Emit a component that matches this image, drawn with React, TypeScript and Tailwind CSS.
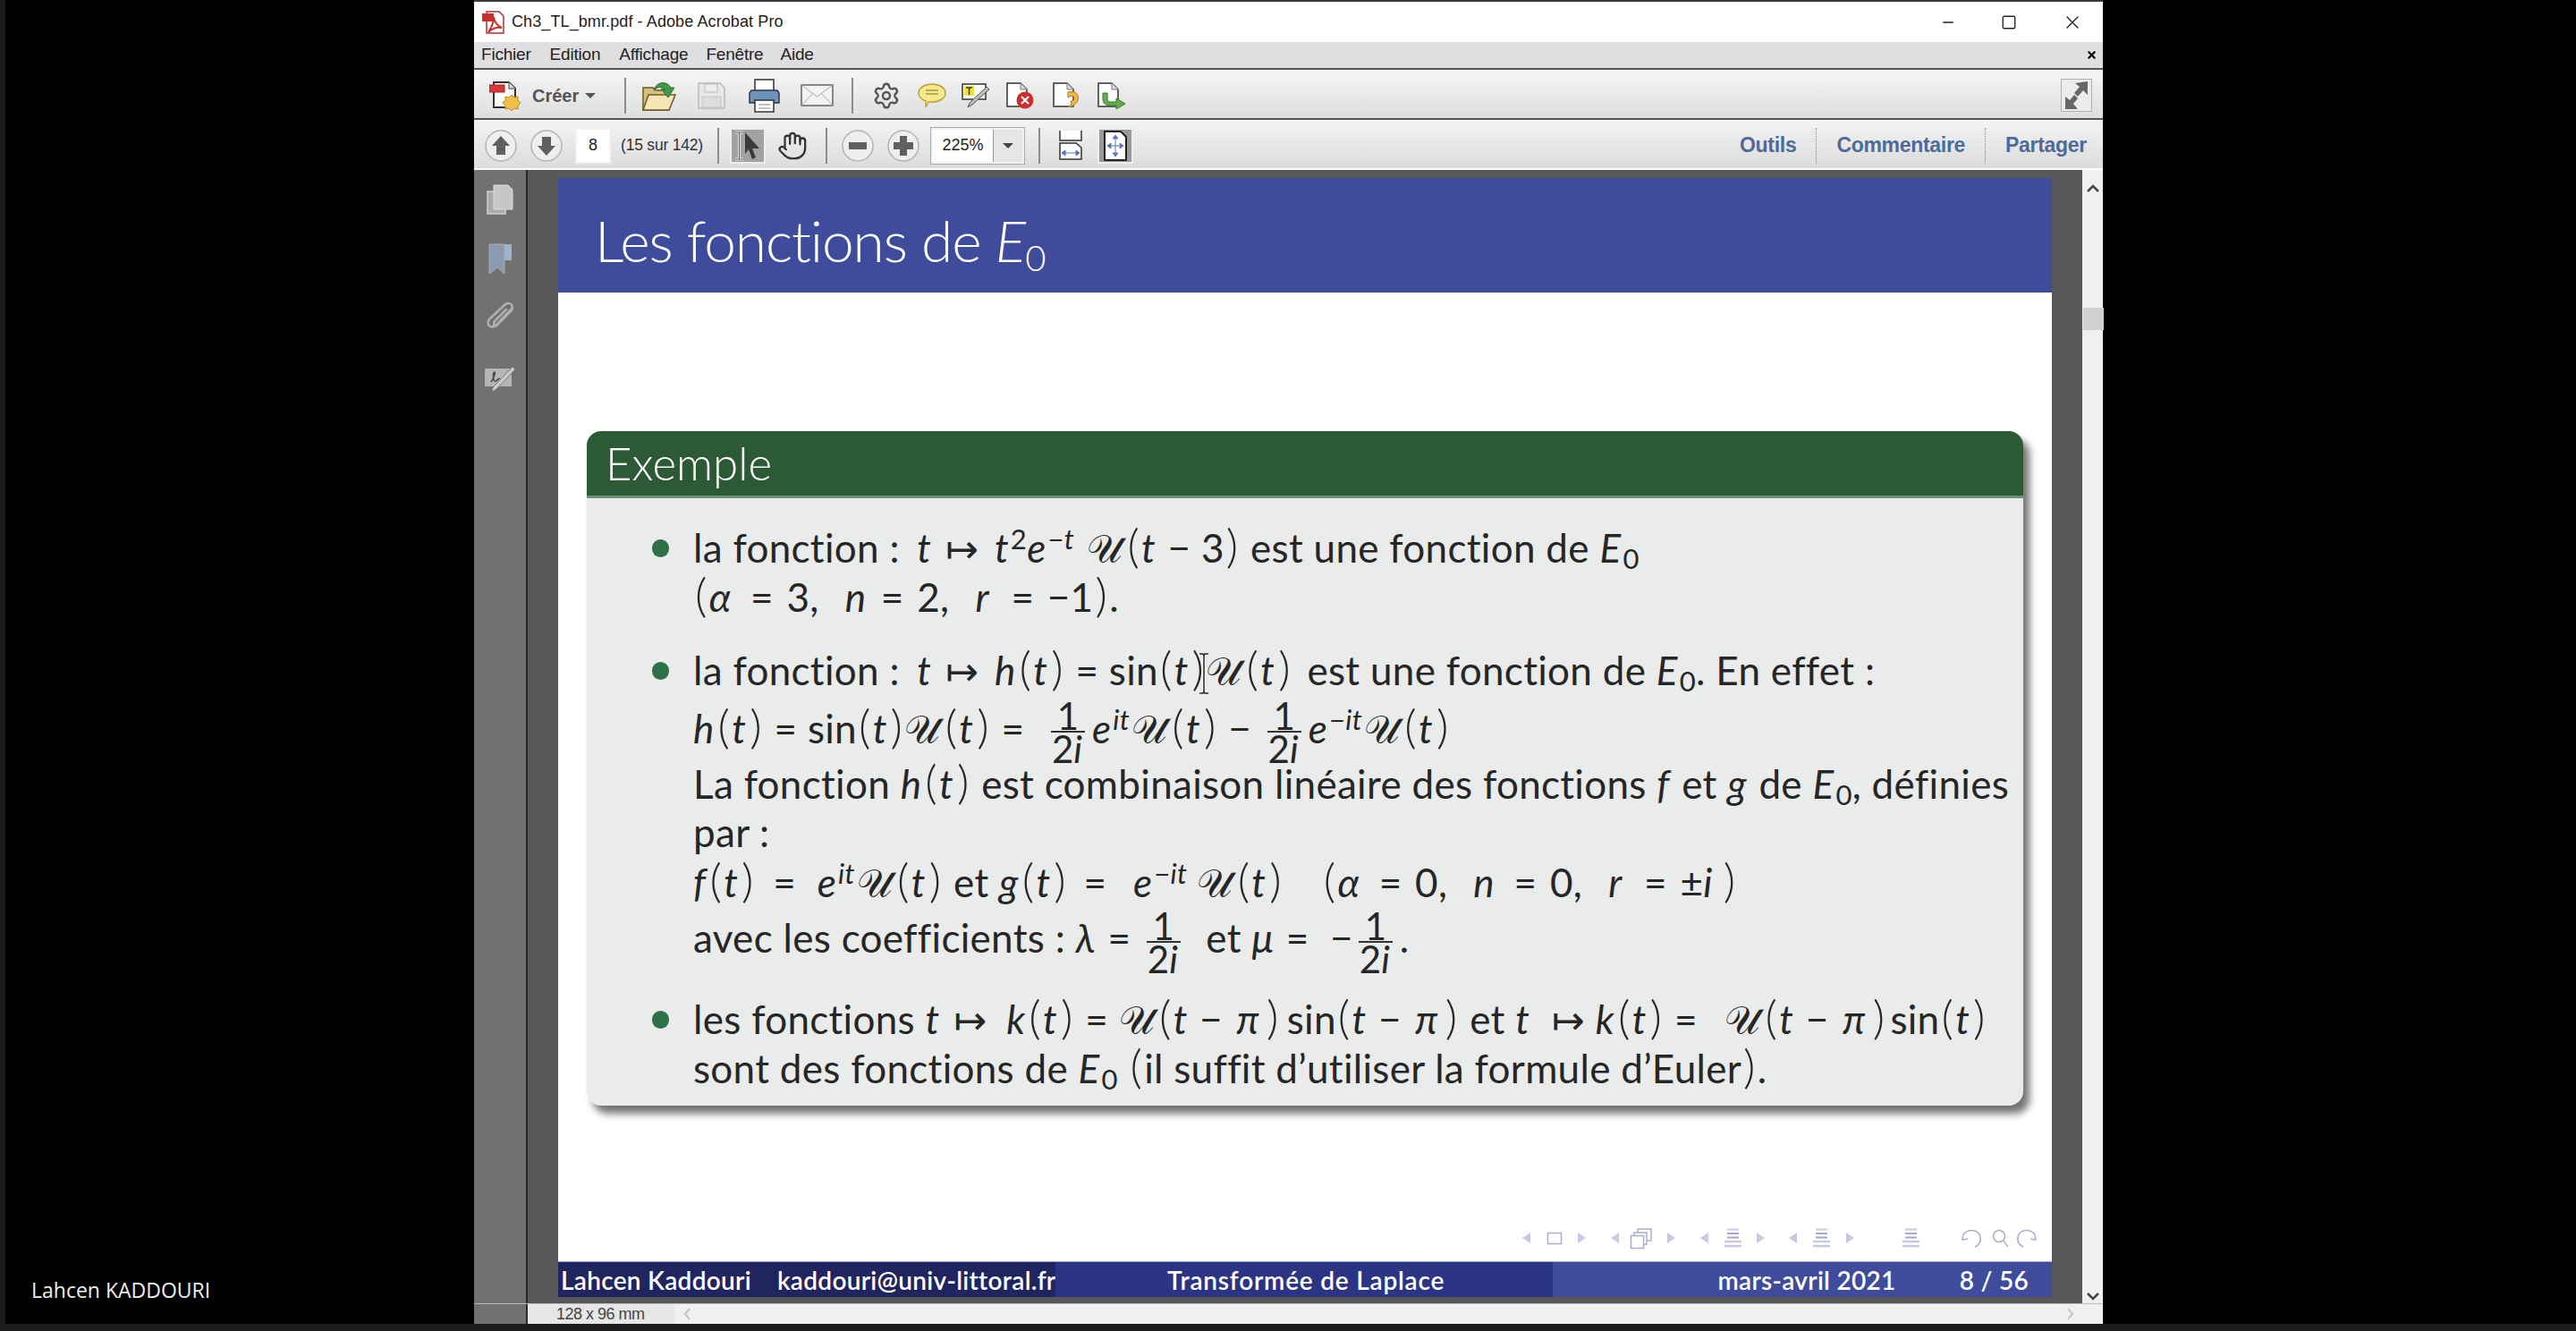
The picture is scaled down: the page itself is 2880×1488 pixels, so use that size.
import React from 'react';
import { Settings, Hand, X, Minus, Square } from 'lucide-react';

// -- Small math helpers for the slide --
const I = ({ children }: { children: React.ReactNode }) => <span className="italic pr-[2px]">{children}</span>;
const Up = ({ children }: { children: React.ReactNode }) => (
  <sup className="text-[31px] top-[-15px] leading-none">{children}</sup>
);
const Sub0 = () => <sub className="text-[31px] top-[7px] bottom-auto leading-none">0</sub>;
const U = () => <span className="font-['DejaVu_Sans',serif] text-[44px] font-light pr-[3px]">𝒰</span>;
const P = ({ children }: { children: React.ReactNode }) => (
  <span className="font-light text-[52px] leading-none px-[2px]">{children}</span>
);
const Tt = () => (
  <>
    <P>(</P>
    <I>t</I>
    <P>)</P>
  </>
);
const Pi = () => <span className="italic pl-[4px] pr-[6px]">π</span>;
const Eq = () => <span className="px-[3px]"> = </span>;
const Mp = () => <span className="pl-[14px]">↦ </span>;
// fixed width gap between math atoms
const Sp = ({ c }: { c: string }) => <span className={`inline-block ${c}`} />;
const Frac = () => (
  <span className="inline-flex flex-col justify-center items-center align-middle h-[40px] ml-[6px] mr-[8px] tracking-normal">
    <span className="text-[42px] leading-[34px]">1</span>
    <span className="w-[38px] h-[2px] bg-[#333] shrink-0" />
    <span className="text-[42px] leading-[36px]">
      2<I>i</I>
    </span>
  </span>
);
const Bullet = () => <span className="w-[19px] h-[20px] rounded-full bg-[#2e7148] shrink-0 mt-[3px] mr-[27px] ml-[-46px]" />;

const Line = ({ className = '', bullet, children }: { className?: string; bullet?: boolean; children: React.ReactNode }) => (
  <div className={`h-[55px] flex items-center ${className}`}>
    {bullet && <Bullet />}
    <div className="whitespace-pre leading-[55px]">{children}</div>
  </div>
);

// -- Toolbar icons, drawn by hand --
const PdfIcon = () => (
  <svg width="27" height="26" viewBox="0 0 27 26" className="shrink-0">
    <path d="M5 1h14l5 5v19H5z" fill="#fff" stroke="#a33" strokeWidth="1.5" />
    <path d="M0 3h13v9H0z" fill="#c9302c" />
    <path d="M7 24c4-6 6-11 6-17 1 6 4 10 9 12-6-1-11 1-15 5z" fill="none" stroke="#c9302c" strokeWidth="2" />
  </svg>
);
const CreateIcon = () => (
  <svg width="36" height="36" viewBox="0 0 36 36" className="shrink-0">
    <path d="M5 3h17l7 7v21H5z" fill="#fdfdfd" stroke="#333" strokeWidth="2" />
    <path d="M22 3v7h7" fill="#ddd" stroke="#777" strokeWidth="1.5" />
    <rect x="0" y="6" width="17" height="8" fill="#d8383a" stroke="#a22" />
    <path d="M25 17l3 3 4-1 0 4 3 3-3 3 0 4-4-1-3 3-3-3-4 1 0-4-3-3 3-3 0-4 4 1z" fill="#f2c04a" stroke="#b98a20" />
  </svg>
);
const FolderIcon = () => (
  <svg width="38" height="36" viewBox="0 0 38 36" className="shrink-0">
    <path d="M1 9h11l3 3h15v22H1z" fill="#d9bf7c" stroke="#6b5a2a" strokeWidth="1.5" />
    <path d="M1 34l6-17h30l-7 17z" fill="#f6e6b4" stroke="#6b5a2a" strokeWidth="1.5" />
    <path d="M13 12c2-9 14-12 19-3l4 0-7 11-8-10 5 1c-4-4-9-3-13 1z" fill="#3f9a45" stroke="#2c6e30" />
  </svg>
);
const SaveIcon = () => (
  <svg width="31" height="30" viewBox="0 0 31 30" className="shrink-0">
    <path d="M1 1h24l5 5v23H1z" fill="#e8e8e8" stroke="#bbb" strokeWidth="1.5" />
    <rect x="8" y="2" width="14" height="9" fill="#eee" stroke="#bbb" />
    <rect x="5" y="16" width="21" height="12" fill="#ddd" stroke="#c4c4c4" />
  </svg>
);
const PrintIcon = () => (
  <svg width="35" height="38" viewBox="0 0 35 38" className="shrink-0">
    <rect x="7" y="1" width="21" height="14" fill="#fff" stroke="#333" strokeWidth="1.5" />
    <path d="M3 13h29l2 3v11H1V16z" fill="#6e93b8" stroke="#335" strokeWidth="1.5" />
    <rect x="7" y="24" width="21" height="13" fill="#fff" stroke="#333" strokeWidth="1.5" />
    <path d="M11 29h13M11 33h13" stroke="#888" />
  </svg>
);
const MailIcon = () => (
  <svg width="37" height="25" viewBox="0 0 37 25" className="shrink-0">
    <rect x="1" y="1" width="35" height="23" fill="#f3f3f3" stroke="#666" strokeWidth="1.5" />
    <path d="M1 1l17.5 13L36 1M1 24l12-13M36 24L24 11" fill="none" stroke="#aaa" />
  </svg>
);
const CommentIcon = () => (
  <svg width="32" height="28" viewBox="0 0 32 28" className="shrink-0">
    <path d="M16 1c8 0 15 4 15 10s-7 10-15 10c-1 0-3 0-4 0l-3 6 0-7C4 18 1 15 1 11 1 5 8 1 16 1z" fill="#f6e88e" stroke="#b9a53a" strokeWidth="1.5" />
    <path d="M9 8h14M9 12h14" stroke="#a8973a" strokeWidth="1.5" />
  </svg>
);
const SignIcon = () => (
  <svg width="32" height="28" viewBox="0 0 32 28" className="shrink-0">
    <path d="M1 1h26v17H1z" fill="#fff" stroke="#333" strokeWidth="1.5" />
    <rect x="3" y="3" width="11" height="11" fill="#f4e23c" />
    <path d="M5 5h7M8.500 5v8" stroke="#333" strokeWidth="1.5" />
    <path d="M28 4l3 3-19 17-5 3 2-5z" fill="#bbb" stroke="#555" />
  </svg>
);
const DocShape = () => (
  <>
    <path d="M1 1h15l7 7v19H1z" fill="#fff" stroke="#333" strokeWidth="1.5" />
    <path d="M16 1v7h7" fill="#ddd" stroke="#777" />
  </>
);
const DocX = () => (
  <svg width="31" height="30" viewBox="0 0 31 30" className="shrink-0">
    <DocShape />
    <circle cx="21" cy="20" r="9.500" fill="#c9302c" />
    <path d="M17 16l8 8M25 16l-8 8" stroke="#fff" strokeWidth="2" />
  </svg>
);
const DocBack = () => (
  <svg width="31" height="30" viewBox="0 0 31 30" className="shrink-0">
    <DocShape />
    <path d="M17 11c8-2 13 2 11 9-1 4-6 7-11 8l4-4-1-3c4 0 5-3 3-5-1-1-3-1-6 1z" fill="#efb648" stroke="#a87c1c" />
  </svg>
);
const DocGreen = () => (
  <svg width="32" height="30" viewBox="0 0 32 30" className="shrink-0">
    <DocShape />
    <path d="M11 12v7c0 2 2 3 4 3h6v-4l10 6-10 6v-4h-7c-5 0-8-3-8-7v-7z" fill="#62ad4e" stroke="#38752a" />
  </svg>
);
const RoundBtn = ({ d }: { d: string }) => (
  <svg width="36" height="36" viewBox="0 0 36 36" className="shrink-0">
    <circle cx="18" cy="18" r="17" fill="#eeeeee" stroke="#b5b5b5" strokeWidth="1.5" />
    <path d={d} fill="#606060" />
  </svg>
);
const SelectIcon = () => (
  <svg width="32" height="34" viewBox="0 0 32 34" className="shrink-0">
    <path d="M2 2h9M2 32h9M6.500 2v30" stroke="#e4e4e4" strokeWidth="3" fill="none" />
    <path d="M2 2h9M2 32h9M6.500 2v30" stroke="#666" strokeWidth="1" fill="none" />
    <path d="M13 2l16 18-8 0 4 10-4 2-4-11-4 5z" fill="#3a3a3a" />
  </svg>
);
const FitWidth = () => (
  <svg width="26" height="33" viewBox="0 0 26 33" className="shrink-0">
    <path d="M1 0v11h24V0" fill="#fff" stroke="#333" strokeWidth="1.5" />
    <path d="M1 14h18l6 5v13H1z" fill="#fff" stroke="#333" strokeWidth="1.5" />
    <path d="M3 25h20M3 25l4-3v6zM23 25l-4-3v6z" fill="#5b78b8" stroke="#5b78b8" />
  </svg>
);
const FitPage = () => (
  <svg width="26" height="34" viewBox="0 0 26 34" className="shrink-0">
    <path d="M1 1h18l6 6v26H1z" fill="#fff" stroke="#222" strokeWidth="2" />
    <path d="M13 5v24M4 17h18M13 5l-3 4h6zM13 29l-3-4h6zM4 17l4-3v6zM22 17l-4-3v6z" fill="#5b78b8" stroke="#5b78b8" />
  </svg>
);
const ExpandIcon = () => (
  <svg width="35" height="37" viewBox="0 0 35 37" className="shrink-0">
    <rect x="0.500" y="0.500" width="34" height="36" fill="#ececec" stroke="#b0b0b0" />
    <path d="M30 3v15l-5-5-6 7-4-4 6-7-5-4zM5 34V20l5 4 5-6 4 4-5 6 5 6z" fill="#666" />
  </svg>
);

// -- Side panel icons --
const PagesIcon = () => (
  <svg width="30" height="34" viewBox="0 0 30 34">
    <rect x="1" y="8" width="20" height="25" fill="#aaa" stroke="#d0d0d0" strokeWidth="1.5" />
    <path d="M8 1h16l5 5v22H8z" fill="#c6c6c6" stroke="#ddd" />
  </svg>
);
const BookmarkIcon = () => (
  <svg width="27" height="35" viewBox="0 0 27 35">
    <path d="M1 1h17v33l-8-7-9 7z" fill="#8a9bb0" stroke="#aab" />
    <path d="M18 1h8v18h-8z" fill="#a3b3c6" />
  </svg>
);
const ClipIcon = () => (
  <svg width="34" height="35" viewBox="0 0 34 35" fill="none" stroke="#b0b0b0" strokeWidth="2.500" strokeLinecap="round">
    <path d="M29 9L12 27c-3 3-7 1-8-1-1-3 0-5 2-7L22 4c3-3 7-2 8 0s1 5-1 7L14 26c-2 2-4 1-4 0s0-3 1-4L24 9" />
  </svg>
);
const SignPanelIcon = () => (
  <svg width="35" height="30" viewBox="0 0 35 30">
    <rect x="0" y="3" width="30" height="20" fill="#b5b5b5" />
    <path d="M7 18c3-4 5-10 4-11-2 0-2 9 0 10s4-3 6-3" fill="none" stroke="#444" strokeWidth="1.500" />
    <path d="M31 1l3 3-22 23-4 2 1-5z" fill="#c9c9c9" stroke="#777" />
  </svg>
);

// -- Beamer navigation strip at the bottom of the slide --
const BeamerNav = () => {
  const c = '#c6c9e2';
  const tri = (x: number, left: boolean) =>
    left ? <path d={`M${x + 9} 5v12l-9-6z`} fill={c} /> : <path d={`M${x} 5v12l9-6z`} fill={c} />;
  const lines = (x: number) => (
    <g>
      <path d={`M${x + 3} 1.500h13`} stroke={c} strokeWidth="2" />
      <path d={`M${x + 3} 6h13M${x + 3} 10.500h13`} stroke="#a4a8cc" strokeWidth="2" />
      <path d={`M${x} 15h19M${x} 20h19`} stroke={c} strokeWidth="2.500" />
    </g>
  );
  return (
    <svg width="580" height="24" viewBox="0 0 580 24" className="shrink-0">
      {tri(2, true)}
      <rect x="30.500" y="5.500" width="15" height="12" fill="none" stroke="#a9adcf" strokeWidth="1.500" />
      {tri(64, false)}
      {tri(101, true)}
      <rect x="123.500" y="8.500" width="14" height="14" fill="#fff" stroke="#a9adcf" strokeWidth="1.500" />
      <path d="M127 8V5h14v13h-3M131 5V1h15v13h-4" fill="none" stroke="#a9adcf" strokeWidth="1.500" />
      {tri(164, false)}
      {tri(201, true)}
      {lines(228)}
      {tri(264, false)}
      {tri(300, true)}
      {lines(327)}
      {tri(364, false)}
      {lines(427)}
      <path d="M495 7c5-6 14-6 18 0 3 6 0 12-5 14M495 7l-1 6 6-1" fill="none" stroke="#a9adcf" strokeWidth="1.500" />
      <circle cx="535" cy="9" r="6.500" fill="none" stroke="#a9adcf" strokeWidth="1.500" />
      <path d="M540 14l5 7" stroke="#a9adcf" strokeWidth="1.500" />
      <path d="M575 7c-5-6-14-6-18 0-3 6 0 12 5 14M575 7l1 6-6-1" fill="none" stroke="#a9adcf" strokeWidth="1.500" />
    </svg>
  );
};

const Divider = ({ className }: { className: string }) => <div className={`w-[2px] h-[40px] bg-[#8c8c8c] shrink-0 ${className}`} />;

export default function App() {
  return (
    <div className="w-[2880px] h-[1488px] bg-black border-l-[6px] border-b-[8px] border-[#1c1c1c] font-['Liberation_Sans',sans-serif] flex relative overflow-hidden">
      <div className="ml-[524px] w-[1821px] h-full flex flex-col border-t-2 border-[#3a3a3a] bg-[#e6e6e6] shrink-0">
        {/* Title bar */}
        <div className="h-[45px] bg-white flex items-center pl-[9px] shrink-0">
          <PdfIcon />
          <span className="ml-[6px] text-[18px] tracking-[0.1px] text-[#222]">Ch3_TL_bmr.pdf - Adobe Acrobat Pro</span>
          <div className="ml-auto flex items-center gap-[50px] pr-[22px] text-[#222]">
            <Minus size={18} strokeWidth={1.8} />
            <Square size={18} strokeWidth={1.8} />
            <X size={24} strokeWidth={1.4} />
          </div>
        </div>
        {/* Menu bar */}
        <div className="h-[31px] bg-[#dfdfe1] flex items-center text-[19px] tracking-[-0.2px] text-[#222] pl-[8px] pr-[6px] shrink-0 border-b-2 border-[#555]">
          <span>Fichier</span>
          <span className="ml-[21px]">Edition</span>
          <span className="ml-[21px]">Affichage</span>
          <span className="ml-[20px]">Fenêtre</span>
          <span className="ml-[19px]">Aide</span>
          <X size={13} strokeWidth={4} className="ml-auto text-black" />
        </div>
        {/* First toolbar */}
        <div className="h-[56px] bg-gradient-to-b from-[#f6f6f6] to-[#dedede] flex items-center pt-[3px] pl-[17px] pr-[12px] shrink-0 border-b-2 border-[#555]">
          <CreateIcon />
          <span className="ml-[12px] text-[20px] font-bold text-[#555] w-[49px]">Créer</span>
          <span className="ml-[10px] w-0 h-0 border-x-[6px] border-x-transparent border-t-[6px] border-t-[#555]" />
          <Divider className="ml-[32px]" />
          <div className="ml-[18px]"><FolderIcon /></div>
          <div className="ml-[24px]"><SaveIcon /></div>
          <div className="ml-[26px]"><PrintIcon /></div>
          <div className="ml-[23px]"><MailIcon /></div>
          <Divider className="ml-[20px]" />
          <Settings size={32} strokeWidth={1.8} color="#555" className="ml-[21px] shrink-0" />
          <div className="ml-[19px]"><CommentIcon /></div>
          <div className="ml-[17px]"><SignIcon /></div>
          <div className="ml-[18px]"><DocX /></div>
          <div className="ml-[21px]"><DocBack /></div>
          <div className="ml-[19px]"><DocGreen /></div>
          <div className="ml-auto"><ExpandIcon /></div>
        </div>
        {/* Second toolbar */}
        <div className="h-[56px] bg-gradient-to-b from-[#f4f4f4] to-[#dcdcdc] flex items-center pt-[3px] pl-[12px] pr-[18px] shrink-0 border-b-2 border-white">
          <RoundBtn d="M18 7l10 11h-5v10H13V18H8z" />
          <div className="ml-[15px]"><RoundBtn d="M18 29L8 18h5V8h10v10h5z" /></div>
          <div className="ml-[14px] w-[40px] h-[40px] bg-white border-2 border-[#f2f2f2] flex items-center justify-center text-[18px] text-[#222] shrink-0">8</div>
          <span className="ml-[11px] text-[17.500px] tracking-[-0.2px] text-[#333] shrink-0">(15 sur 142)</span>
          <Divider className="ml-[16px]" />
          <div className="ml-[12px] w-[40px] h-[40px] bg-[#a2a2a2] border-2 border-[#eee] flex items-center justify-center shrink-0"><SelectIcon /></div>
          <Hand size={34} strokeWidth={1.6} color="#333" className="ml-[13px] shrink-0" />
          <Divider className="ml-[20px]" />
          <div className="ml-[16px]"><RoundBtn d="M8 14h20v8H8z" /></div>
          <div className="ml-[15px]"><RoundBtn d="M14 7h8v7h7v8h-7v7h-8v-7H7v-8h7z" /></div>
          <div className="ml-[13px] w-[104px] h-[40px] flex border-2 border-[#f2f2f2] outline outline-1 outline-[#aaa] bg-white shrink-0">
            <span className="w-[68px] flex items-center justify-center text-[18px] text-[#222] border-r border-[#999]">225%</span>
            <span className="flex-1 bg-[#e6e6e6] flex items-center justify-center">
              <span className="w-0 h-0 border-x-[6px] border-x-transparent border-t-[6px] border-t-[#444]" />
            </span>
          </div>
          <Divider className="ml-[16px]" />
          <div className="ml-[21px]"><FitWidth /></div>
          <div className="ml-[17px] w-[40px] h-[40px] bg-[#999999] border-2 border-[#eee] flex items-center justify-center shrink-0"><FitPage /></div>
          <div className="ml-auto flex items-center text-[23px] font-bold text-[#4f6a9a] tracking-[-0.3px]">
            <span>Outils</span>
            <span className="mx-[22px] h-[40px] border-l border-dotted border-[#888]" />
            <span>Commentaire</span>
            <span className="mx-[22px] h-[40px] border-l border-dotted border-[#888]" />
            <span>Partager</span>
          </div>
        </div>

        {/* Document area */}
        <div className="flex-1 flex min-h-0">
          <div className="w-[60px] bg-[#717171] border-r-2 border-[#2a2a2a] flex flex-col items-center pt-[16px] shrink-0">
            <PagesIcon />
            <div className="mt-[32px]"><BookmarkIcon /></div>
            <div className="mt-[30px]"><ClipIcon /></div>
            <div className="mt-[37px]"><SignPanelIcon /></div>
          </div>
          <div className="w-[34px] bg-[#58585a] shrink-0" />
          {/* Slide */}
          <div className="w-[1670px] bg-[#58585a] pt-[9px] pb-[7px] flex flex-col shrink-0">
            <div className="flex-1 bg-white flex flex-col font-['Lato','DejaVu_Sans',sans-serif] text-[#262626] min-h-0">
              <div className="h-[128px] bg-[#3f4b9b] text-white flex items-center pt-[12px] pl-[41px] text-[64px] font-light tracking-[-1.1px] shrink-0">
                <span>
                  Les fonctions de <span className="italic">E</span>
                  <sub className="text-[40px] top-[10px] bottom-auto leading-none">0</sub>
                </span>
              </div>
              <div className="mt-[155px] mx-[32px] rounded-[16px] shadow-[7px_9px_8px_rgba(70,70,70,0.75)] bg-[#e9ecea] h-[754px] shrink-0 flex flex-col">
                <div className="h-[75px] rounded-t-[16px] bg-[#2b5a35] border-b-[3px] border-[#6d9175] text-white text-[51px] font-light flex items-center pl-[21px] shrink-0">Exemple</div>
                <div className="pl-[119px] pt-[27px] text-[44px] tracking-[0.3px]">
                  <Line bullet>
                    la fonction : <Sp c="w-[8px]" /><I>t</I><Mp /><Sp c="w-[6px]" /><I>t</I><Up>2</Up><I>e</I><Up>−<I>t</I></Up><Sp c="w-[12px]" /><U /><P>(</P><I>t</I> − 3<P>)</P> est une fonction de <I>E</I><Sub0 />
                  </Line>
                  <Line>
                    <P>(</P><I>α</I><Sp c="w-[5px]" /><Eq />3,<Sp c="w-[6px]" />  <I>n</I><Eq />2,<Sp c="w-[6px]" />  <I>r</I><Sp c="w-[8px]" /><Eq />−1<P>)</P>.
                  </Line>
                  <Line bullet className="mt-[27px]">
                    la fonction : <Sp c="w-[8px]" /><I>t</I><Mp /><Sp c="w-[6px]" /><I>h</I><Tt /> = sin<Tt /><U /><Tt /><Sp c="w-[5px]" /> est une fonction de <I>E</I><Sub0 />. En effet :
                  </Line>
                  <Line className="mt-[10px]">
                    <I>h</I><Tt /> = sin<Tt /><U /><Tt /> = <Sp c="w-[12px]" /><Frac /><I>e</I><Up><I>it</I></Up><U /><Tt /> − <Frac /><I>e</I><Up>−<I>it</I></Up><U /><Tt />
                  </Line>
                  <Line className="mt-[7px]">
                    La fonction <I>h</I><Tt /> est combinaison linéaire des fonctions <I>f</I> et <I>g</I> de <I>E</I><Sub0 />, définies
                  </Line>
                  <Line>par :</Line>
                  <Line>
                    <I>f</I><Tt /><Sp c="w-[8px]" /> = <Sp c="w-[12px]" /><I>e</I><Up><I>it</I></Up><U /><Tt /> et <I>g</I><Tt /><Sp c="w-[6px]" /> = <Sp c="w-[18px]" /><I>e</I><Up>−<I>it</I></Up><Sp c="w-[9px]" /><U /><Tt />   <Sp c="w-[8px]" /><P>(</P><I>α</I><Sp c="w-[5px]" /><Eq />0,<Sp c="w-[6px]" />  <I>n</I><Sp c="w-[5px]" /><Eq />0,<Sp c="w-[6px]" />  <I>r</I><Sp c="w-[8px]" /><Eq />±<I>i</I><Sp c="w-[8px]" /><P>)</P>
                  </Line>
                  <Line className="mt-[8px]">
                    avec les coefficients : <I>λ</I> = <Frac /><Sp c="w-[9px]" /> et <I>μ</I> = <Sp c="w-[12px]" />−<Frac />.
                  </Line>
                  <Line bullet className="mt-[35px]">
                    les fonctions <I>t</I><Mp /><Sp c="w-[10px]" /><I>k</I><Tt /> = <U /><P>(</P><I>t</I> − <Pi /><P>)</P><Sp c="w-[7px]" />sin<P>(</P><I>t</I> − <Pi /><P>)</P> et <I>t</I><Sp c="w-[9px]" /><Mp /><I>k</I><Tt /> = <Sp c="w-[19px]" /><U /><P>(</P><I>t</I> − <Pi /><P>)</P><Sp c="w-[4px]" />sin<Tt />
                  </Line>
                  <Line>
                    sont des fonctions de <I>E</I><Sub0 /> <P>(</P>il suffit d’utiliser la formule d’Euler<P>)</P>.
                  </Line>
                </div>
              </div>
              <div className="mt-auto mb-[13px] flex justify-end pr-[14px]">
                <BeamerNav />
              </div>
              <div className="h-[40px] flex text-white text-[28px] font-semibold tracking-[0.3px] shrink-0 border-t border-[#9aa0cc]">
                <div className="w-[556px] bg-[#20245f] flex items-center pl-[3px] whitespace-pre overflow-hidden">
                  <span>Lahcen Kaddouri</span>
                  <span className="ml-[29px]">kaddouri@univ-littoral.fr</span>
                </div>
                <div className="w-[556px] bg-[#2c3584] flex items-center pl-[125px] tracking-[0.8px]">Transformée de Laplace</div>
                <div className="flex-1 bg-[#3f4b9b] flex items-center justify-end pr-[26px]">
                  <span>mars-avril 2021</span>
                  <span className="ml-[71px]">8 / 56</span>
                </div>
              </div>
            </div>
          </div>
          {/* Page gutter and scrollbar */}
          <div className="w-[34px] bg-[#58585a] shrink-0" />
          <div className="flex-1 bg-[#f0f0f0] flex flex-col items-center pt-[16px] pb-[3px] text-[#444]">
            <svg width="14" height="10" viewBox="0 0 14 10"><path d="M1 8l6-6 6 6" fill="none" stroke="#444" strokeWidth="2.500" /></svg>
            <div className="w-full h-[25px] bg-[#d0d0d0] mt-[128px] ml-[2px]" />
            <svg width="14" height="10" viewBox="0 0 14 10" className="mt-auto"><path d="M1 2l6 6 6-6" fill="none" stroke="#444" strokeWidth="2.500" /></svg>
          </div>
        </div>
        {/* Status bar */}
        <div className="h-[23px] bg-[#f0f0f0] flex items-center border-t border-[#bbb] shrink-0">
          <div className="w-[60px] h-full bg-[#717171] border-r-2 border-[#2a2a2a]" />
          <span className="w-[164px] h-full bg-[#e6e6e6] pl-[32px] flex items-center text-[18px] tracking-[-0.5px] text-[#444]">128 x 96 mm</span>
          <svg width="8" height="14" viewBox="0 0 8 14" className="ml-[10px]"><path d="M7 1L2 7l5 6" fill="none" stroke="#c4c4c4" strokeWidth="2" /></svg>
          <svg width="8" height="14" viewBox="0 0 8 14" className="ml-auto mr-[32px]"><path d="M1 1l5 6-5 6" fill="none" stroke="#c4c4c4" strokeWidth="2" /></svg>
        </div>
      </div>
      {/* Mouse pointer caught over the slide */}
      <svg width="14" height="46" viewBox="0 0 14 46" className="absolute left-[1333px] top-[730px]">
        <path d="M2 1h4l1 2 1-2h4M7 3v40M2 45h4l1-2 1 2h4" fill="none" stroke="#fff" strokeWidth="3" />
        <path d="M2 1h4l1 2 1-2h4M7 3v40M2 45h4l1-2 1 2h4" fill="none" stroke="#222" strokeWidth="1.500" />
      </svg>
      <span className="absolute left-[29px] bottom-[21px] text-[23px] text-[#eee] font-['Open_Sans',sans-serif]">Lahcen KADDOURI</span>
    </div>
  );
}
